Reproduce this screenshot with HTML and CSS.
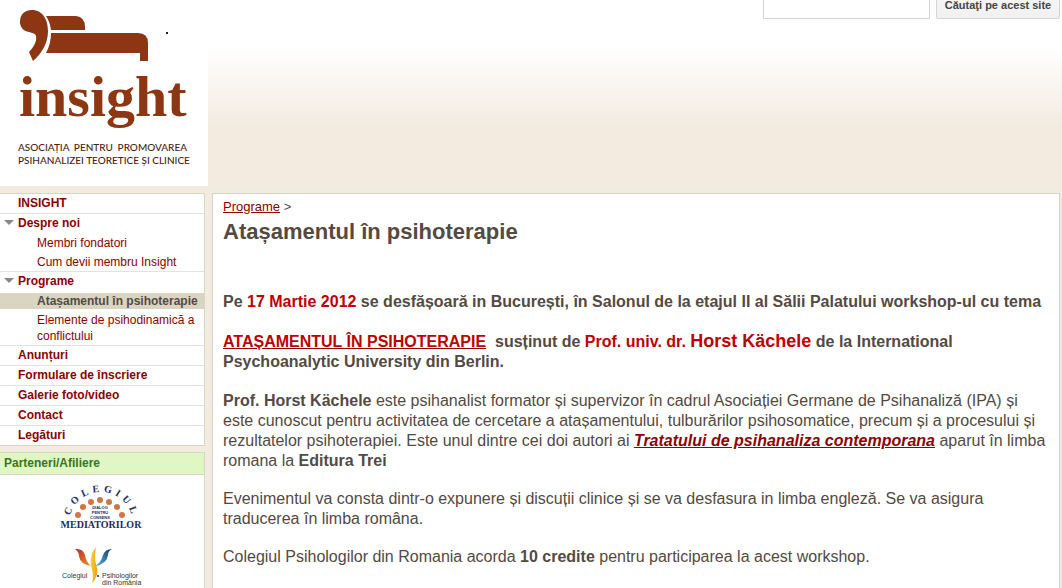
FILE: index.html
```html
<!DOCTYPE html>
<html lang="ro">
<head>
<meta charset="utf-8">
<title>Atașamentul în psihoterapie - Insight</title>
<link rel="stylesheet" href="styles.css">
</head>
<body>
<header class="header">
  <a class="brand" href="#" aria-label="Insight">
    <svg class="brand-mark" viewBox="0 0 208 134" width="208" height="134">
      <g fill="#8c3613">
        <path d="M20 22C20 14 25 10 32 10C43 10 48 20 48 31C48 43 42 53 33 61L29 52C34 47 37 41 36 36C35 33 32 33 29 32C23 31 20 27 20 22Z"/>
        <path d="M46 16H76Q85 17 85 27V30H51Q50 22 46 16Z"/>
        <path d="M51 33H138Q148 33 148 43V61H140V53H46Q51 44 51 33Z"/>
        <text class="brand-name" x="19" y="116">insight</text>
      </g>
      <rect x="166" y="32" width="2" height="2" fill="#222"/>
    </svg>
    <span class="tagline">ASOCIAȚIA PENTRU PROMOVAREA</span>
    <span class="tagline">PSIHANALIZEI TEORETICE ȘI CLINICE</span>
  </a>
  <form class="search">
    <input class="search-box" type="text" aria-label="Căutare">
    <button class="search-button" type="button">Căutaţi pe acest site</button>
  </form>
</header>
<div class="columns">
  <aside class="sidebar">
    <nav class="panel">
      <ul class="menu">
        <li class="group"><a href="#">INSIGHT</a></li>
        <li class="group open"><a href="#">Despre noi</a>
          <ul class="submenu">
            <li><a href="#">Membri fondatori</a></li>
            <li><a href="#">Cum devii membru Insight</a></li>
          </ul>
        </li>
        <li class="group open"><a href="#">Programe</a>
          <ul class="submenu">
            <li class="current"><a href="#" aria-current="page">Atașamentul în psihoterapie</a></li>
            <li><a href="#">Elemente de psihodinamică a conflictului</a></li>
          </ul>
        </li>
        <li class="group"><a href="#">Anunțuri</a></li>
        <li class="group"><a href="#">Formulare de înscriere</a></li>
        <li class="group"><a href="#">Galerie foto/video</a></li>
        <li class="group"><a href="#">Contact</a></li>
        <li class="group"><a href="#">Legături</a></li>
      </ul>
    </nav>
    <section class="panel partners">
      <h2 class="partners-title">Parteneri/Afiliere</h2>
      <div class="partner-logos">
        <a href="#" aria-label="Colegiul Mediatorilor">
          <svg viewBox="0 0 80 48" width="80" height="48">
            <path id="arc" d="M9 40A32 32 0 1 1 73 40" fill="none"/>
            <g fill="#232d63">
              <text class="arc-text"><textPath href="#arc" startOffset="51%" text-anchor="middle">COLEGIUL</textPath></text>
              <text class="mediator-name" x="41" y="44" text-anchor="middle">MEDIATORILOR</text>
            </g>
            <g fill="#cf7645">
              <circle cx="18" cy="31" r="3"/><circle cx="23" cy="23" r="3"/><circle cx="31" cy="18" r="3"/><circle cx="40" cy="16" r="3"/><circle cx="49" cy="18" r="3"/><circle cx="57" cy="23" r="3"/><circle cx="62" cy="31" r="3"/>
            </g>
            <g class="motto" fill="#232d63" text-anchor="middle">
              <text x="40" y="25">DIALOG</text><text x="40" y="30">PENTRU</text><text x="40" y="35">CONSENS</text>
            </g>
          </svg>
        </a>
        <a href="#" aria-label="Colegiul Psihologilor din România">
          <svg viewBox="0 0 80 42" width="80" height="42">
            <defs>
              <linearGradient id="gold"><stop offset="0" stop-color="#f7d928"/><stop offset="1" stop-color="#f19a21"/></linearGradient>
              <linearGradient id="rust" x2="1" y2="1"><stop offset="0" stop-color="#b9252c"/><stop offset="1" stop-color="#ee972e"/></linearGradient>
              <linearGradient id="blue" x1="1" x2="0" y2="1"><stop offset="0" stop-color="#173c75"/><stop offset="1" stop-color="#54b3da"/></linearGradient>
            </defs>
            <path d="M15 5Q23 4 25 11Q26 18 31 22Q20 20 19 12Q19 8 15 5Z" fill="url(#rust)"/>
            <path d="M52 5Q45 5 43 11Q41 19 35 22Q47 20 48 11Q48 7 52 5Z" fill="url(#blue)"/>
            <path d="M36 3Q29 12 31 22Q34 31 32 40Q40 30 36 20Q34 11 36 3Z" fill="url(#gold)"/>
            <g class="college" fill="#333">
              <text x="2" y="34">Colegiul</text><circle cx="38" cy="32" r="1"/><text x="42" y="34">Psihologilor</text><text x="42" y="41">din România</text>
            </g>
          </svg>
        </a>
      </div>
    </section>
  </aside>
  <main class="panel content">
    <div class="breadcrumb"><a href="#">Programe</a> &gt;</div>
    <h1 class="title">Atașamentul în psihoterapie</h1>
    <p class="lead">Pe <span class="accent">17 Martie 2012</span> se desfășoară in București, în Salonul de la etajul II al Sălii Palatului workshop-ul cu tema</p>
    <p class="lead"><a href="#"><span class="accent">ATAȘAMENTUL ÎN PSIHOTERAPIE</span></a>&nbsp; susținut de <span class="accent">Prof. univ. dr. <span class="speaker">Horst Kächele</span></span> de la International Psychoanalytic University din Berlin.</p>
    <p><b>Prof. Horst Kächele</b> este psihanalist formator și supervizor în cadrul Asociației Germane de Psihanaliză (IPA) și este cunoscut pentru activitatea de cercetare a atașamentului, tulburărilor psihosomatice, precum și a procesului și rezultatelor psihoterapiei. Este unul dintre cei doi autori ai <a class="book" href="#">Tratatului de psihanaliza contemporana</a> aparut în limba romana la <b>Editura Trei</b></p>
    <p>Evenimentul va consta dintr-o expunere și discuții clinice și se va desfasura in limba engleză. Se va asigura traducerea în limba româna.</p>
    <p>Colegiul Psihologilor din Romania acorda <b>10 credite</b> pentru participarea la acest workshop.</p>
  </main>
</div>
</body>
</html>
```
FILE: styles.css
```css
* { box-sizing: border-box; }
body {
  margin: 0;
  background: #f2ebe0;
  color: #534a43;
  font-family: "Liberation Sans", Arial, sans-serif;
  font-size: 16px;
  line-height: 20px;
}
a { color: #8f0000; }
ul { margin: 0; padding: 0; list-style: none; }

.header {
  display: flex;
  justify-content: space-between;
  align-items: flex-start;
  overflow: hidden;
  background: linear-gradient(#fff 46px, #f3ebe0 126px);
}
.brand {
  display: flex;
  flex-direction: column;
  width: 208px;
  padding-bottom: 19px;
  background: #fff;
  color: #4a2413;
  text-decoration: none;
}
.brand-mark { display: block; margin-bottom: 7px; }
.brand-name { font: bold 58px "Liberation Serif", serif; }
.tagline {
  margin: 0 21px 0 18px;
  font: 500 10px/13px Lato, sans-serif;
  text-align-last: justify;
  white-space: nowrap;
}
.search { display: flex; gap: 6px; margin: -9px 2px 0 0; }
.search-box {
  width: 167px;
  height: 28px;
  border: 1px solid #d5d5d5;
  background: #fff;
}
.search-button {
  width: 124px;
  height: 28px;
  padding: 0;
  border: 1px solid #d5d5d5;
  border-radius: 2px;
  background: linear-gradient(#f8f8f8, #f0f0f0);
  color: #444;
  font: bold 11px "Liberation Sans", Arial, sans-serif;
}

.columns {
  display: grid;
  grid-template-columns: 205px 1fr;
  gap: 7px;
  min-height: calc(100vh - 186px);
  padding: 7px 2px 0 0;
}
.sidebar { display: flex; flex-direction: column; gap: 6px; }
.panel { border: 1px solid #d8d5c2; background: #fff; }
.sidebar .panel { border-left: 0; }

.menu { font-size: 12px; line-height: 19px; }
.menu a { text-decoration: none; }
.group { padding-left: 18px; font-weight: bold; }
.group + .group { border-top: 1px solid #e2e2e2; }
.open { position: relative; }
.open::before {
  content: "";
  position: absolute;
  left: 4px;
  top: 6px;
  border: 5px solid transparent;
  border-top-color: #888;
  border-bottom: 0;
}
.submenu { margin-left: -18px; font-weight: normal; line-height: 16px; }
.submenu li { margin: 2px 0 1px; padding: 0 5px 0 37px; }
.submenu li + li { margin-top: 3px; }
.submenu .current { background: #d9d5c0; font-weight: bold; }
.current a { color: #534a43; }

.partners { flex: 1; border-bottom: 0; }
.partners-title {
  margin: 0;
  padding-left: 4px;
  border-bottom: 1px solid #d8d5c2;
  background: #e0f7c3;
  color: #38761d;
  font-size: 12px;
  line-height: 21px;
}
.partner-logos {
  display: flex;
  flex-direction: column;
  align-items: center;
  gap: 12px;
  padding: 9px 4px 0 0;
}
.partner-logos svg { display: block; overflow: visible; }
.arc-text { font: bold 10px "Liberation Serif", serif; letter-spacing: 4px; }
.mediator-name { font: bold 10px "Liberation Serif", serif; }
.motto { font: bold 4px "Liberation Sans", sans-serif; }
.college { font: 7px "Liberation Sans", sans-serif; }

.content { padding: 5px 10px 20px; border-bottom: 0; }
.breadcrumb { font-size: 13px; line-height: 16px; }
.title { margin: 3px 0 46px; font-size: 22px; line-height: 28px; }
.content p { margin: 0 0 18px; }
.content .lead { margin-bottom: 19px; font-weight: bold; }
.accent { color: #c00000; }
.speaker { font-size: 18px; }
.book { font-weight: bold; font-style: italic; }
```
